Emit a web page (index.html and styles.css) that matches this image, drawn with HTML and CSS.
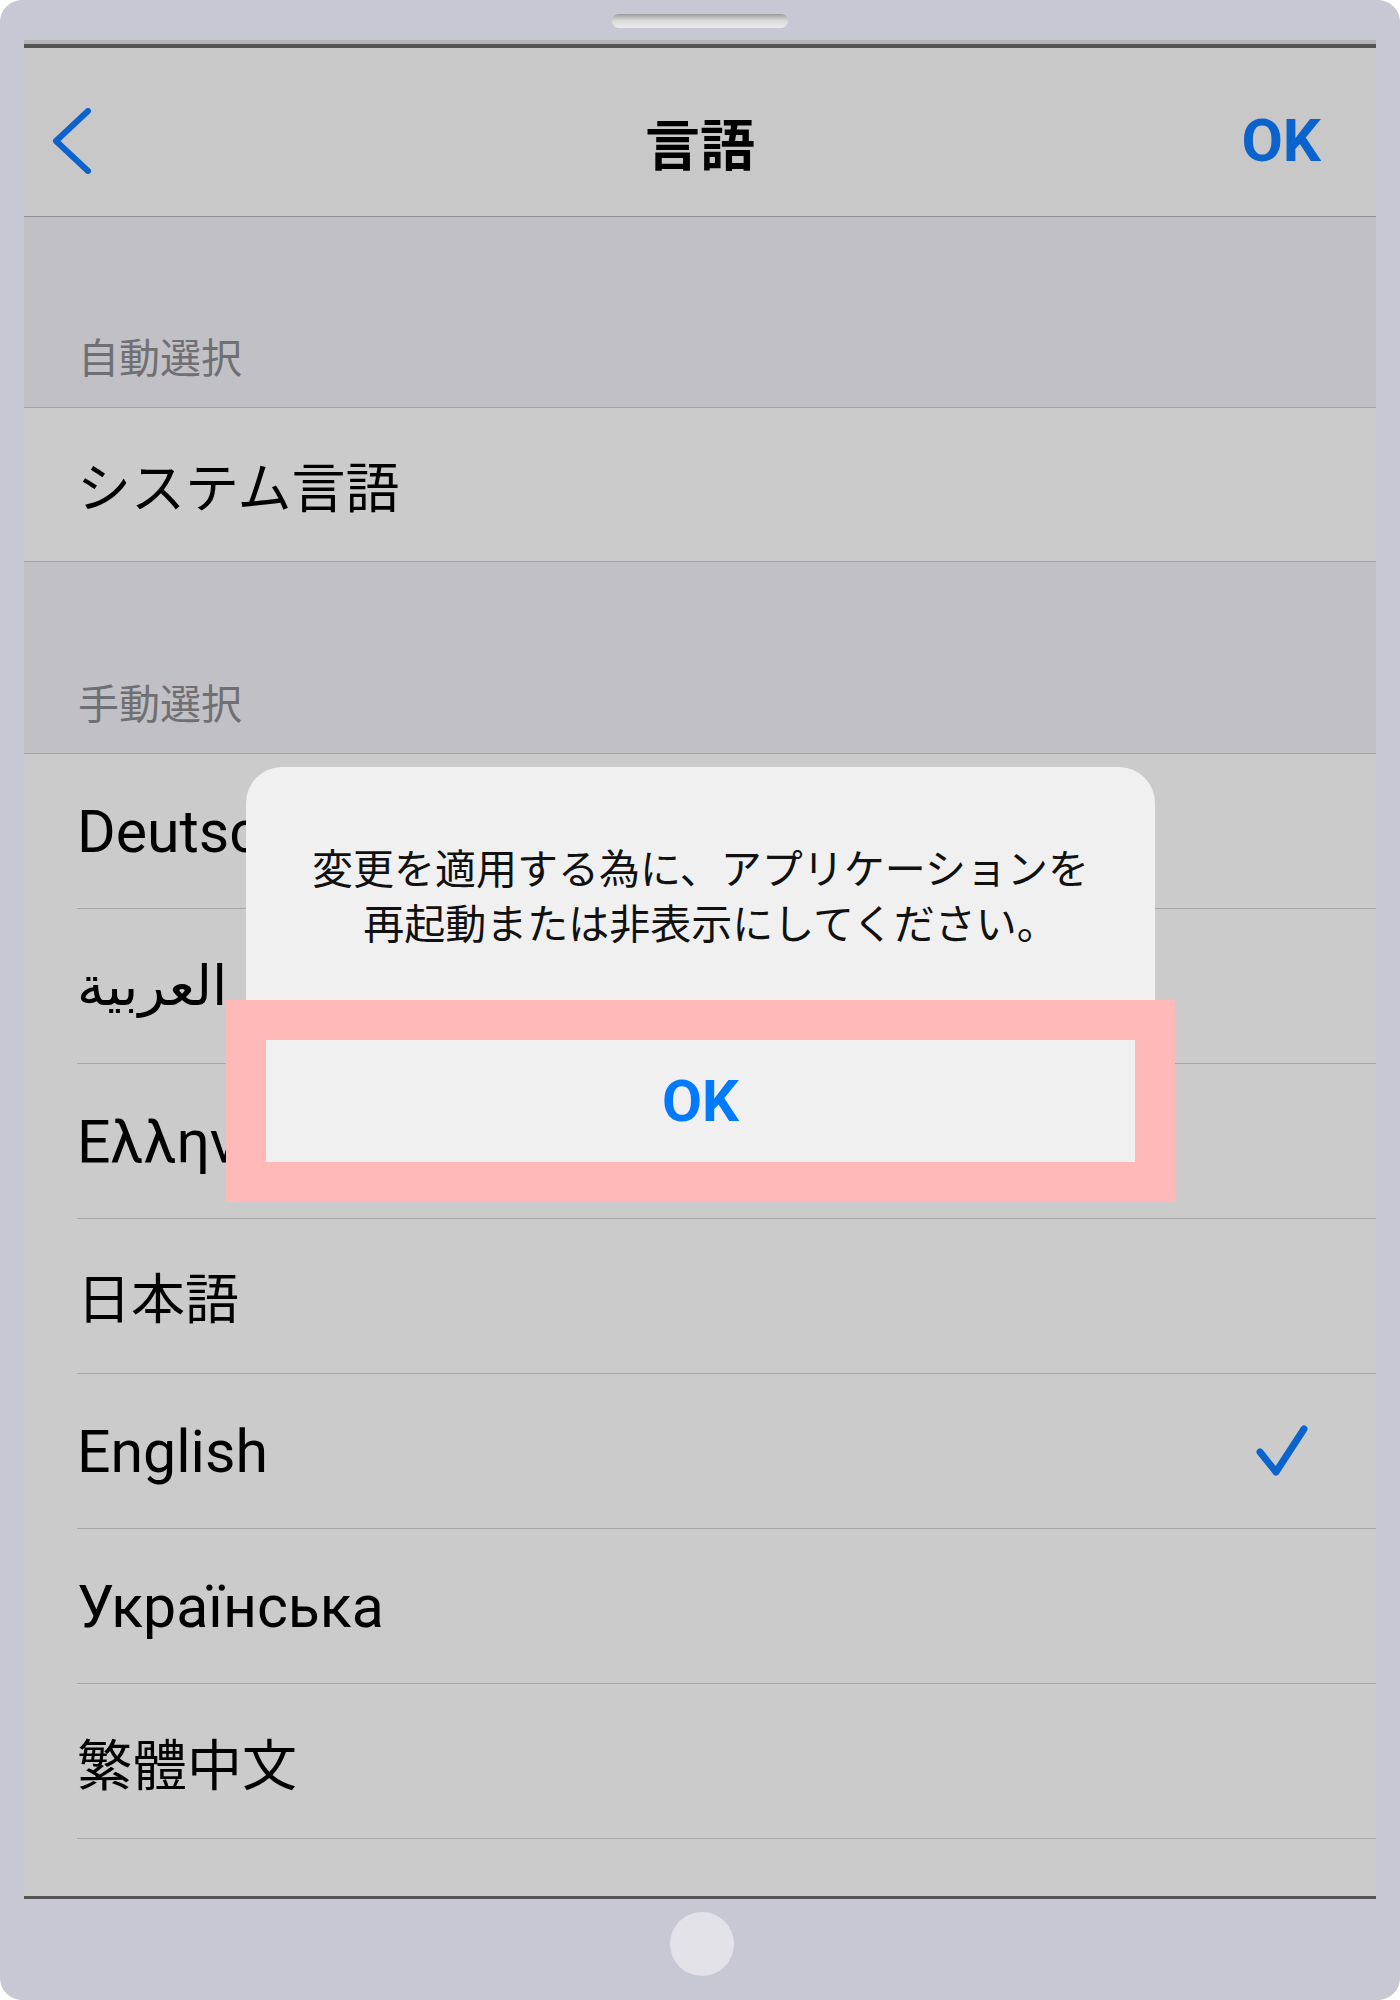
FILE: index.html
```html
<!DOCTYPE html>
<html lang="ja">
  <head>
    <title>言語</title>
    <link rel="stylesheet" href="styles.css">
  </head>
  <body>
    <div class="device">
      <div class="bezel-top">
        <div class="speaker"></div>
      </div>

      <div class="screen">
        <div class="status-strip"></div>

        <div class="navbar">
          <div class="nav-left">
            <svg class="back" width="40" height="66" viewBox="0 0 40 66">
              <path d="M36 3 L4 33 L36 63" fill="none" stroke="#0b63ce" stroke-width="6" stroke-linecap="round" stroke-linejoin="round"/>
            </svg>
          </div>
          <div class="nav-title">言語</div>
          <div class="nav-right">OK</div>
        </div>

        <div class="group-header first">自動選択</div>
        <div class="group single">
          <div class="row plain"><span class="label cjk">システム言語</span></div>
        </div>

        <div class="group-header">手動選択</div>
        <div class="group list">
          <div class="row"><span class="label">Deutsch</span></div>
          <div class="row"><span class="label arabic">العربية</span></div>
          <div class="row"><span class="label">Ελληνικά</span></div>
          <div class="row"><span class="label cjk">日本語</span></div>
          <div class="row">
            <span class="label">English</span>
            <svg class="check" width="56" height="56" viewBox="0 0 56 56">
              <path d="M6 29 L22 49 L50 6" fill="none" stroke="#0b63ce" stroke-width="7" stroke-linecap="round" stroke-linejoin="round"/>
            </svg>
          </div>
          <div class="row"><span class="label">Українська</span></div>
          <div class="row"><span class="label cjk tc">繁體中文</span></div>
        </div>

        <!-- alert shown over the list -->
        <div class="alert">
          <div class="alert-message">変更を適用する為に、アプリケーションを<br><span class="second-line">再起動または非表示にしてください。</span></div>
          <div class="highlight">
            <div class="alert-button">OK</div>
          </div>
        </div>
      </div>

      <div class="bezel-bottom">
        <div class="home"></div>
      </div>
    </div>
  </body>
</html>
```

FILE: styles.css
```css
body {
  margin: 0;
  background: #ffffff;
  font-family: Roboto, "Noto Sans CJK JP", "DejaVu Sans", sans-serif;
}

.device {
  width: 1400px;
  height: 2000px;
  box-sizing: border-box;
  background: #c8c8d4;
  border-radius: 22px;
  padding: 0 24px;
  display: flex;
  flex-direction: column;
}

.bezel-top {
  height: 40px;
  display: flex;
  justify-content: center;
}

.speaker {
  width: 176px;
  height: 14px;
  margin-top: 14px;
  border-radius: 7px;
  background: linear-gradient(#9c9c9c, #d8d8d8 45%, #ececec);
}

.screen {
  position: relative;
  height: 1859px;
  display: flex;
  flex-direction: column;
  background: #cbcbcb;
  border-bottom: 3px solid #555555;
  box-sizing: border-box;
  overflow: hidden;
}

.status-strip {
  height: 4px;
  background: #b4b4b4;
  border-bottom: 4px solid #555555;
}

.navbar {
  height: 169px;
  box-sizing: border-box;
  padding-top: 18px;
  background: #c8c8c8;
  border-bottom: 1px solid #8f8f8f;
  display: grid;
  grid-template-columns: 1fr auto 1fr;
  align-items: center;
}

.nav-left {
  padding-left: 28px;
}

.back {
  display: block;
}

.nav-title {
  font-family: "Noto Sans CJK JP", sans-serif;
  font-weight: 700;
  font-size: 55px;
  line-height: 1;
  color: #000000;
}

.nav-right {
  justify-self: end;
  padding-right: 55px;
  font-family: Roboto, sans-serif;
  font-weight: 700;
  font-size: 60px;
  line-height: 1;
  color: #0b63ce;
}

.group-header {
  height: 192px;
  box-sizing: border-box;
  padding: 0 0 31px 54px;
  background: #c1c0c5;
  border-bottom: 1px solid #a4a4a8;
  display: flex;
  align-items: flex-end;
  font-family: "Noto Sans CJK JP", sans-serif;
  font-size: 41px;
  line-height: 1;
  color: #707074;
}

.group-header.first {
  height: 191px;
}

.group {
  background: #cbcbcb;
}

.group.single {
  border-bottom: 1px solid #a4a4a4;
}

.group.list {
  flex: 1;
}

.row {
  height: 154px;
  margin-left: 53px;
  padding: 0 66px 0 0;
  border-bottom: 1px solid #a8a8a8;
  display: flex;
  align-items: center;
  justify-content: space-between;
}

.row.plain {
  height: 153px;
  border-bottom: none;
}

.label {
  font-family: Roboto, "DejaVu Sans", sans-serif;
  font-size: 59px;
  line-height: 1;
  color: #000000;
  white-space: nowrap;
}

.label.cjk {
  font-family: "Noto Sans CJK JP", sans-serif;
  font-size: 54px;
}

.label.tc {
  font-family: "Noto Sans CJK TC", sans-serif;
  font-size: 55px;
}

.label.arabic {
  font-family: "DejaVu Sans", sans-serif;
  font-size: 55px;
}

.alert {
  position: absolute;
  left: 222px;
  top: 727px;
  width: 909px;
  background: #f0f0f0;
  border-radius: 36px 36px 0 0;
}

.alert-message {
  padding: 72px 20px 51px;
  font-family: "Noto Sans CJK JP", sans-serif;
  font-size: 41px;
  line-height: 55px;
  text-align: center;
  color: #111111;
}

.second-line {
  padding-left: 20px;
}

.highlight {
  margin: 0 -20px;
  padding: 40px;
  background: #ffb9b9;
}

.alert-button {
  height: 122px;
  background: #f0f0f0;
  display: flex;
  align-items: center;
  justify-content: center;
  font-family: Roboto, sans-serif;
  font-weight: 700;
  font-size: 58px;
  color: #007aff;
}

.bezel-bottom {
  flex: 1;
  display: flex;
  justify-content: center;
  padding-top: 13px;
  padding-left: 4px;
}

.home {
  width: 64px;
  height: 64px;
  border-radius: 50%;
  background: #e2e2e8;
}
```
